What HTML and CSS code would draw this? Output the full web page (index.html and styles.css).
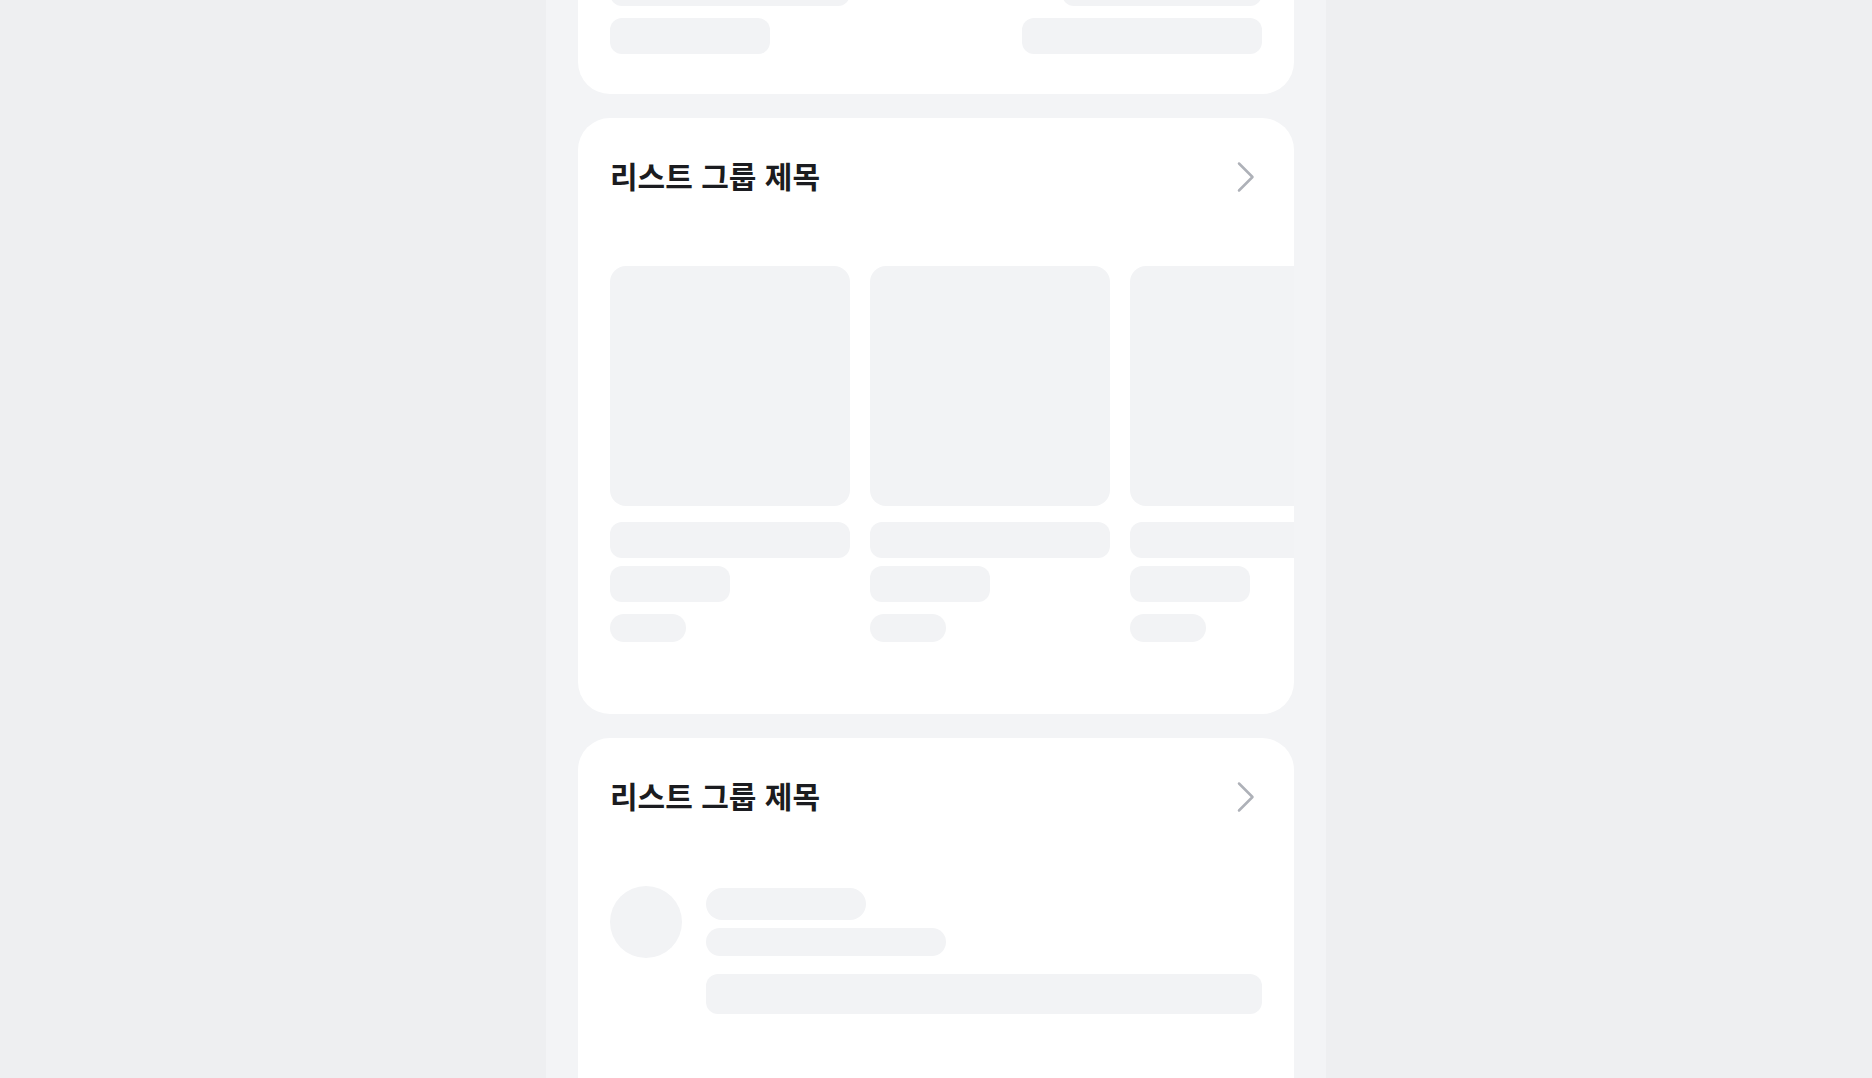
FILE: index.html
```html
<!DOCTYPE html>
<html lang="ko">
<head>
  <meta charset="UTF-8">
  <title>리스트 그룹</title>
  <link rel="stylesheet" href="styles.css">
</head>
<body>

  <!-- PAGE COLUMN -->
  <div id="page">

    <!-- CARD: KEY / VALUE ROWS (scrolled, top cut off) -->
    <section class="card card-rows">
      <div class="kv-row">
        <span class="sk sk-36 w-240"></span>
        <span class="sk sk-36 w-200"></span>
      </div>
      <div class="kv-row">
        <span class="sk sk-36 w-160"></span>
        <span class="sk sk-36 w-240"></span>
      </div>
    </section>

    <!-- CARD: HORIZONTAL TILES -->
    <section class="card">
      <div class="card-head">
        <h2>리스트 그룹 제목</h2>
        <svg class="chevron" width="32" height="32" viewBox="0 0 32 32">
          <path d="M9 2.5 L22.5 16 L9 29.5" fill="none" stroke="#aeb1b8" stroke-width="2.5" stroke-linecap="round" stroke-linejoin="round"/>
        </svg>
      </div>

      <div class="tile-scroller">
        <div class="tile">
          <div class="tile-thumb"></div>
          <span class="sk sk-36 w-240 gap-16"></span>
          <span class="sk sk-36 w-120 gap-8"></span>
          <span class="sk sk-28 w-76 gap-12"></span>
        </div>
        <div class="tile">
          <div class="tile-thumb"></div>
          <span class="sk sk-36 w-240 gap-16"></span>
          <span class="sk sk-36 w-120 gap-8"></span>
          <span class="sk sk-28 w-76 gap-12"></span>
        </div>
        <div class="tile">
          <div class="tile-thumb"></div>
          <span class="sk sk-36 w-240 gap-16"></span>
          <span class="sk sk-36 w-120 gap-8"></span>
          <span class="sk sk-28 w-76 gap-12"></span>
        </div>
      </div>
    </section>

    <!-- CARD: AVATAR LIST -->
    <section class="card card-tall">
      <div class="card-head">
        <h2>리스트 그룹 제목</h2>
        <svg class="chevron" width="32" height="32" viewBox="0 0 32 32">
          <path d="M9 2.5 L22.5 16 L9 29.5" fill="none" stroke="#aeb1b8" stroke-width="2.5" stroke-linecap="round" stroke-linejoin="round"/>
        </svg>
      </div>

      <div class="avatar-list">
        <div class="avatar-row">
          <div class="avatar"></div>
          <div class="avatar-body">
            <span class="sk sk-32 w-160"></span>
            <span class="sk sk-28 w-240 gap-8"></span>
            <span class="sk sk-40 w-full gap-18"></span>
          </div>
        </div>
      </div>
    </section>

  </div>

</body>
</html>
```

FILE: styles.css
```css
html, body {
  height: 100%;
}

body {
  background-color: #eeeff1;
  font-family: "Noto Sans CJK KR", "Noto Sans", sans-serif;
  margin: 0;
  padding: 0;
  overflow: hidden;
}

#page {
  width: 780px;
  min-height: 100%;
  margin: 0 auto;
  padding: 0 32px;
  box-sizing: border-box;
  background-color: #f3f4f6;
  display: flex;
  flex-direction: column;
  gap: 24px;
}

.card {
  background: #fff;
  border-radius: 32px;
  padding: 32px;
  overflow: hidden;
  flex-shrink: 0;
}

/* first card is scrolled past its top */
.card-rows {
  margin-top: -30px;
  padding-top: 0;
  padding-bottom: 40px;
  border-radius: 0 0 32px 32px;
  display: flex;
  flex-direction: column;
  gap: 12px;
}

.card-tall {
  min-height: 480px;
}

.kv-row {
  display: flex;
  justify-content: space-between;
}

.card-head {
  height: 56px;
  display: flex;
  align-items: center;
  justify-content: space-between;
}

.card-head h2 {
  margin: 0 0 6px;
  font-size: 30px;
  font-weight: 700;
  letter-spacing: 0;
  color: #1b1c20;
}

.chevron {
  display: block;
  margin-bottom: 2px;
}

/* skeleton blocks */
.sk {
  display: block;
  background: #f2f3f5;
  flex-shrink: 0;
}

.sk-28 { height: 28px; border-radius: 14px; }
.sk-32 { height: 32px; border-radius: 16px; }
.sk-36 { height: 36px; border-radius: 12px; }
.sk-40 { height: 40px; border-radius: 12px; }

.w-76 { width: 76px; }
.w-120 { width: 120px; }
.w-160 { width: 160px; }
.w-200 { width: 200px; }
.w-240 { width: 240px; }
.w-full { width: 100%; }

.gap-8 { margin-top: 8px; }
.gap-12 { margin-top: 12px; }
.gap-16 { margin-top: 16px; }
.gap-18 { margin-top: 18px; }

.tile-scroller {
  display: flex;
  gap: 20px;
  margin-right: -32px;
  padding: 60px 0 40px;
  overflow: hidden;
}

.tile {
  width: 240px;
  flex-shrink: 0;
}

.tile-thumb {
  width: 240px;
  height: 240px;
  border-radius: 16px;
  background: #f2f3f5;
}

.avatar-list {
  padding-top: 60px;
  display: flex;
  flex-direction: column;
  gap: 40px;
}

.avatar-row {
  display: flex;
  gap: 24px;
}

.avatar {
  width: 72px;
  height: 72px;
  border-radius: 50%;
  background: #f2f3f5;
  flex-shrink: 0;
}

.avatar-body {
  flex: 1;
  padding-top: 2px;
}
```
